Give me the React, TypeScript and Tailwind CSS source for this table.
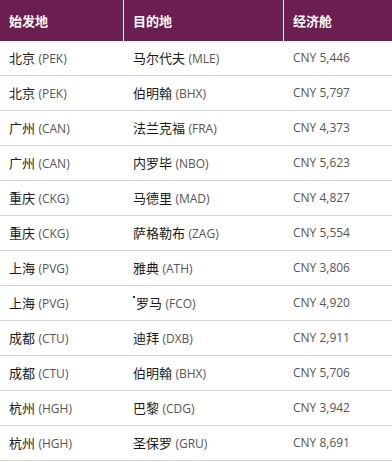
import React from "react";

const rows: [string, string, string, string, string][] = [
  ["北京", "PEK", "马尔代夫", "MLE", "5,446"],
  ["北京", "PEK", "伯明翰", "BHX", "5,797"],
  ["广州", "CAN", "法兰克福", "FRA", "4,373"],
  ["广州", "CAN", "内罗毕", "NBO", "5,623"],
  ["重庆", "CKG", "马德里", "MAD", "4,827"],
  ["重庆", "CKG", "萨格勒布", "ZAG", "5,554"],
  ["上海", "PVG", "雅典", "ATH", "3,806"],
  ["上海", "PVG", "罗马", "FCO", "4,920"],
  ["成都", "CTU", "迪拜", "DXB", "2,911"],
  ["成都", "CTU", "伯明翰", "BHX", "5,706"],
  ["杭州", "HGH", "巴黎", "CDG", "3,942"],
  ["杭州", "HGH", "圣保罗", "GRU", "8,691"],
];

const cjk = { fontFamily: '"Noto Sans CJK SC", sans-serif' };
const lat = { fontFamily: '"Open Sans", "Noto Sans CJK SC", sans-serif' };

export default function App() {
  return (
    <div className="w-[392px] h-[462px] bg-white overflow-hidden">
      <div className="grid grid-cols-[123px_1px_159px_1px_1fr] h-[41px] bg-[#6b1e4f] text-white font-bold text-[13px] items-center" style={cjk}>
        <div className="pl-[9px]">始发地</div>
        <div className="bg-white h-full" />
        <div className="pl-[9px]">目的地</div>
        <div className="bg-white h-full" />
        <div className="pl-[9px]">经济舱</div>
      </div>
      {rows.map((r, i) => (
        <div key={i} className="grid grid-cols-[124px_160px_1fr] h-[35px] items-center border-b border-[#d4d4d4] text-[13px]">
          <div className="pl-[9px] text-[#1a1a1a]">
            <span style={cjk}>{r[0]}</span>{" "}
            <span className="text-[#555] text-[12px]" style={lat}>({r[1]})</span>
          </div>
          <div className="pl-[9px] text-[#1a1a1a]">
            {i === 7 && (
              <span className="inline-block w-[2px] h-[2px] bg-[#333] align-top mt-[3px] mr-[1px]" />
            )}
            <span style={cjk}>{r[2]}</span>{" "}
            <span className="text-[#555] text-[12px]" style={lat}>({r[3]})</span>
          </div>
          <div className="pl-[9px] text-[#555] text-[12px]" style={lat}>CNY {r[4]}</div>
        </div>
      ))}
    </div>
  );
}
